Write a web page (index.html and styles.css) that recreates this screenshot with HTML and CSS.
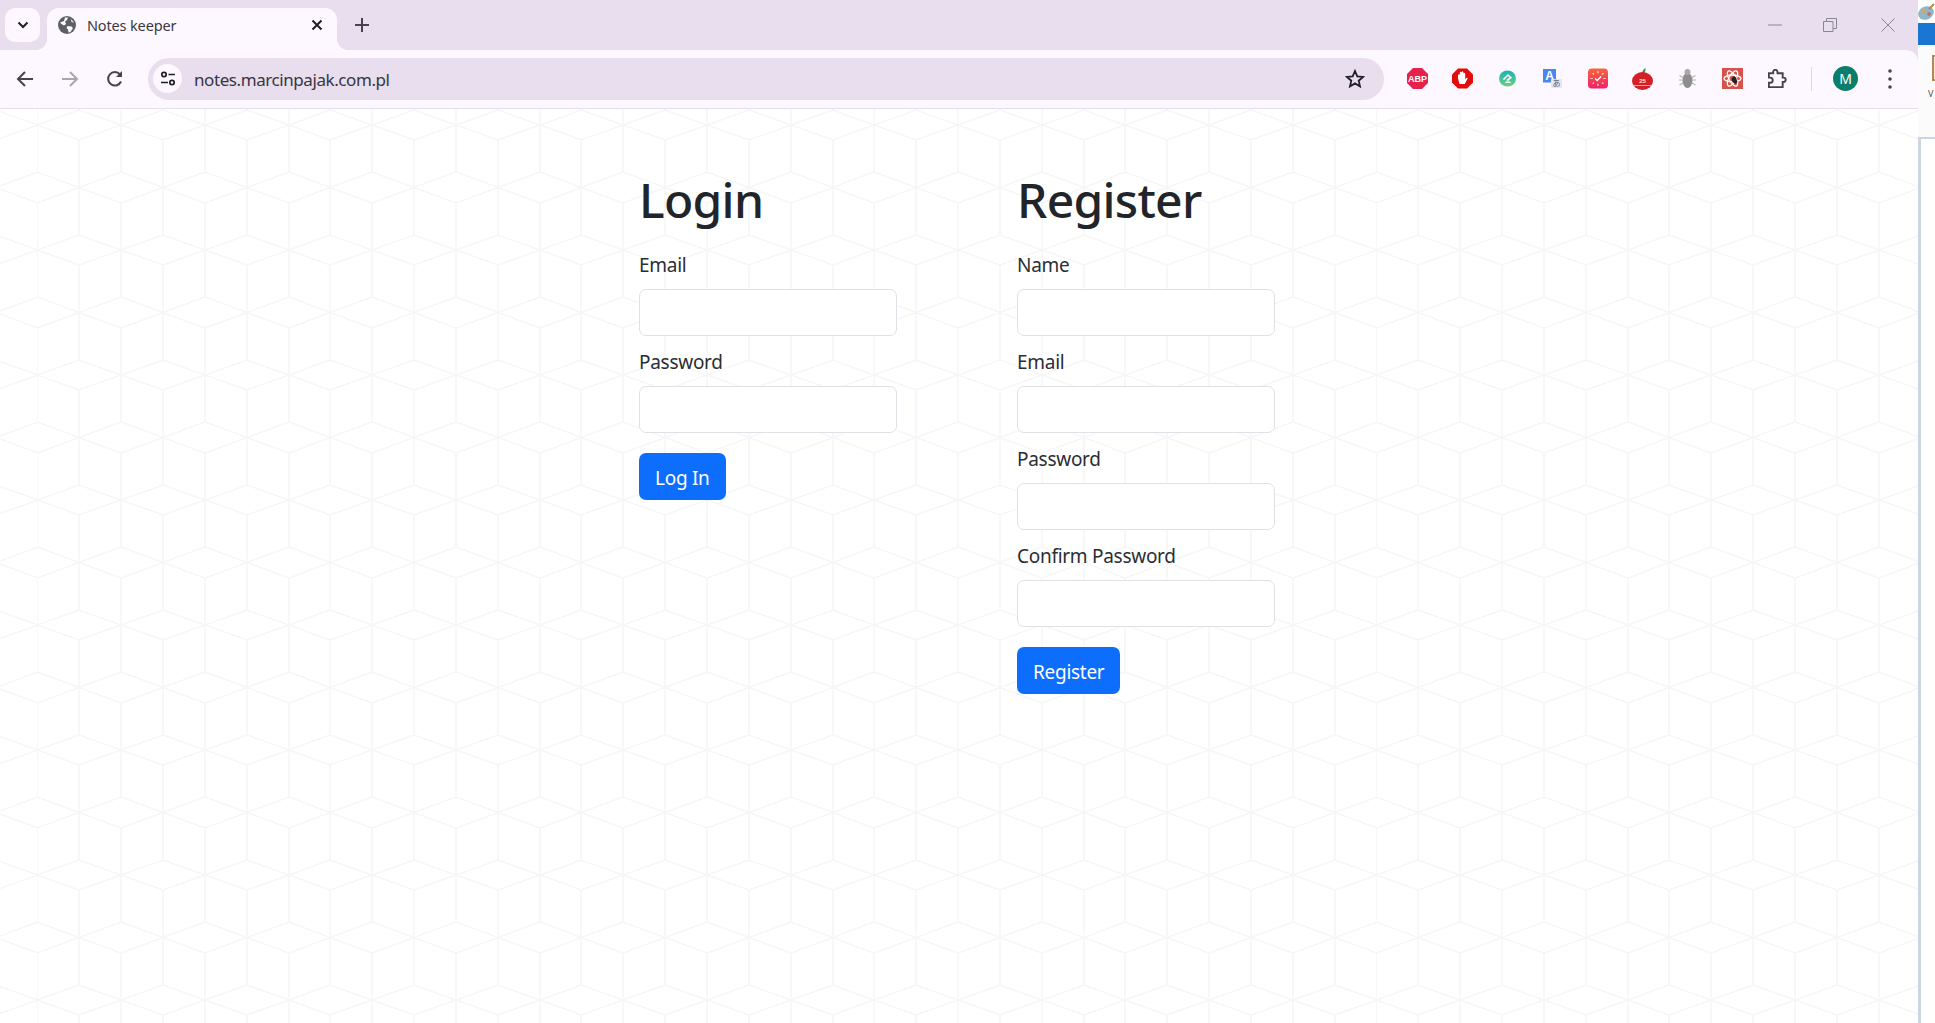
FILE: index.html
```html
<!DOCTYPE html>
<html lang="en">

<head>
  <meta charset="UTF-8">
  <meta name="viewport" content="width=device-width, initial-scale=1.0">
  <title>Notes keeper</title>
  <link rel="stylesheet" href="styles.css">
</head>

<body>
  <div class="browser">

    <div class="tab-strip">
      <button class="tab-search">
        <svg width="14" height="14" viewBox="0 0 14 14"><path d="M2.5 4.5 7 9l4.5-4.5" fill="none" stroke="#1f1f27" stroke-width="2"/></svg>
      </button>
      <div class="tab">
        <svg class="globe" width="18" height="18" viewBox="0 0 18 18">
          <circle cx="9" cy="9" r="9" fill="#5c5f66"/>
          <path d="M2 6.500 6 5l1-3.500h3L9 4 7 5.500l1 2.500-2 1.500L3.500 8zM9.500 10l4 .5 1.500 1.500-2.500 4-2 .5-.5-3-1.500-1.500zM13 3l3 3.500-2.500-.5z" fill="#fdf7ff"/>
        </svg>
        <span class="tab-title">Notes keeper</span>
        <svg class="tab-close" width="12" height="12" viewBox="0 0 12 12"><path d="M1.500 1.500l9 9m0-9l-9 9" stroke="#1f1f27" stroke-width="2"/></svg>
      </div>
      <svg class="new-tab" width="14" height="14" viewBox="0 0 14 14"><path d="M7 0v14M0 7h14" stroke="#47424d" stroke-width="2"/></svg>
      <div class="window-controls">
        <svg width="14" height="14" viewBox="0 0 14 14"><path d="M0 7h14" stroke="#8a8690"/></svg>
        <svg width="14" height="14" viewBox="0 0 14 14"><path d="M.5 3.500h9.500v10H.5zM3.500 3.500V.5h10v10H10" fill="none" stroke="#8a8690"/></svg>
        <svg width="14" height="14" viewBox="0 0 14 14"><path d="M.5.500l13 13m0-13l-13 13" stroke="#8a8690"/></svg>
      </div>
    </div>

    <div class="toolbar">
      <div class="nav-buttons">
        <svg width="18" height="18" viewBox="0 0 18 18"><path d="M17 9H2.500M9 2 2 9l7 7" fill="none" stroke="#47424d" stroke-width="2"/></svg>
        <svg width="18" height="18" viewBox="0 0 18 18"><path d="M1 9h14.500M9 2l7 7-7 7" fill="none" stroke="#a9a5ad" stroke-width="2"/></svg>
        <svg width="18" height="18" viewBox="0 0 18 18"><path d="M15 11.500A6.700 6.700 0 1 1 14 4.500" fill="none" stroke="#47424d" stroke-width="2"/><path d="M16 1v6h-6z" fill="#47424d"/></svg>
      </div>

      <div class="address-bar">
        <span class="site-settings">
          <svg width="16" height="16" viewBox="0 0 16 16" fill="none" stroke="#1f1f27" stroke-width="1.700"><circle cx="4" cy="3.500" r="2.200"/><path d="M8.500 3.500H15M1 11.500h7"/><circle cx="12" cy="11.500" r="2.200"/></svg>
        </span>
        <span class="url">notes.marcinpajak.com.pl</span>
        <svg class="star" width="20" height="20" viewBox="0 0 20 20"><path d="M10 2l2.300 5.400 5.800.5-4.400 3.800 1.300 5.700-5-3-5 3 1.300-5.700-4.400-3.800 5.800-.5z" fill="none" stroke="#1f1f27" stroke-width="1.800"/></svg>
      </div>

      <div class="extensions">
        <span class="ext">
          <svg width="21" height="21" viewBox="0 0 21 21"><path d="M6 0h9l6 6v9l-6 6H6l-6-6V6z" fill="#e8214c"/><text x="10.500" y="14" text-anchor="middle" class="ext-label">ABP</text></svg>
        </span>
        <span class="ext">
          <svg width="21" height="21" viewBox="0 0 21 20"><path d="M6 0h9l6 6v8l-6 6H6l-6-6V6z" fill="#e20c0c"/><path d="M6 10V6.500q.9-1.300 1.800 0V4q.9-1.300 1.800 0V3.500q.9-1.300 1.800 0V5q.9-1.300 1.800 0v6l1.400-1.700q1.400-.4.9.9l-2.700 5.300H7.500z" fill="#fff"/></svg>
        </span>
        <span class="ext">
          <svg width="17" height="17" viewBox="0 0 17 16">
            <defs><linearGradient id="greenGrad" x1="0" y1="0" x2="0" y2="1"><stop offset="0" stop-color="#17b3b8"/><stop offset="1" stop-color="#6fce7c"/></linearGradient></defs>
            <ellipse cx="8.500" cy="8" rx="8.500" ry="8" fill="url(#greenGrad)"/>
            <path d="M4.500 9 9 4.500l2.800 2.700L8 10M6.500 11.700h5" fill="none" stroke="#fff" stroke-width="1.600"/>
          </svg>
        </span>
        <span class="ext">
          <svg width="19" height="19" viewBox="0 0 19 19">
            <rect width="13" height="13.500" fill="#4a86ee"/>
            <text x="6.500" y="11" text-anchor="middle" class="ext-a">A</text>
            <rect x="8" y="10" width="11" height="9" rx="1" fill="#e9e4ee"/>
            <text x="13.500" y="17" text-anchor="middle" class="ext-kana">あ</text>
          </svg>
        </span>
        <span class="ext">
          <svg width="20" height="21" viewBox="0 0 21 21">
            <defs><linearGradient id="clockGrad" x1="0" y1="0" x2="0" y2="1"><stop offset="0" stop-color="#f7663a"/><stop offset="1" stop-color="#f2206a"/></linearGradient></defs>
            <rect width="21" height="21" rx="4" fill="url(#clockGrad)"/>
            <path d="M10.500 2.500v2.500M10.500 16v2.500M2.500 10.500H5M16 10.500h2.500M4.800 4.800l1.500 1.500M14.700 14.700l1.500 1.500M16.200 4.800l-1.500 1.500M6.300 14.700l-1.500 1.500" stroke="#ffd7cb" stroke-width="1.300"/>
            <path d="M7.500 10.500l2.200 2 4-4" fill="none" stroke="#fff" stroke-width="1.500"/>
          </svg>
        </span>
        <span class="ext">
          <svg width="21" height="22" viewBox="0 0 21 22">
            <path d="M10.500 6q-1-3.500 3-6 .5 4.500-3 6z" fill="#2f9a43"/>
            <ellipse cx="10.500" cy="13" rx="10.500" ry="9" fill="#d32027"/>
            <path d="M1.500 17.500h18" stroke="#f4a6a0" stroke-width="1"/>
            <text x="10.500" y="14.500" text-anchor="middle" class="ext-tomato">25</text>
          </svg>
        </span>
        <span class="ext">
          <svg width="17" height="19" viewBox="0 0 17 19">
            <ellipse cx="8.500" cy="11.500" rx="5" ry="7.500" fill="#8d8d90"/>
            <ellipse cx="8.500" cy="3" rx="3" ry="3" fill="#a9a9ac"/>
            <path d="M.5 6.500l3.500 2M0 11h3.800M.5 16l3.500-2M16.500 6.500 13 8.500M17 11h-3.800M16.500 16 13 14" stroke="#b2b2b5" stroke-width="1.100"/>
          </svg>
        </span>
        <span class="ext">
          <svg width="21" height="21" viewBox="0 0 21 21">
            <rect width="21" height="21" fill="#d6524a"/>
            <g fill="none" stroke="#fff" stroke-width="1.300">
              <ellipse cx="10.500" cy="10.500" rx="8.500" ry="3.500"/>
              <ellipse cx="10.500" cy="10.500" rx="8.500" ry="3.500" transform="rotate(60 10.500 10.500)"/>
              <ellipse cx="10.500" cy="10.500" rx="8.500" ry="3.500" transform="rotate(120 10.500 10.500)"/>
            </g>
            <path d="M12 8l2 1.500 1.500 4.500-2 2-3-2-1-3.500z" fill="#2a2024"/>
          </svg>
        </span>
        <span class="ext">
          <svg width="19" height="19" viewBox="0 0 22 22"><path d="M1 5h5V3.500a2.500 2.500 0 0 1 5 0V5h6v5h1a2.500 2.500 0 0 1 0 5h-1v6H1v-5h1.500a3 3 0 0 0 0-6H1z" fill="none" stroke="#47424d" stroke-width="2.200"/></svg>
        </span>
        <span class="toolbar-divider"></span>
        <span class="avatar">M</span>
        <svg class="menu-dots" width="4" height="20" viewBox="0 0 4 20" fill="#47424d"><circle cx="2" cy="2" r="1.800"/><circle cx="2" cy="10" r="1.800"/><circle cx="2" cy="18" r="1.800"/></svg>
      </div>
    </div>

    <main class="page">
      <div class="forms">
        <form class="auth-form">
          <h1>Login</h1>
          <div class="field">
            <label>Email</label>
            <input type="email">
          </div>
          <div class="field">
            <label>Password</label>
            <input type="password">
          </div>
          <button type="button" class="btn">Log In</button>
        </form>

        <form class="auth-form">
          <h1>Register</h1>
          <div class="field">
            <label>Name</label>
            <input type="text">
          </div>
          <div class="field">
            <label>Email</label>
            <input type="email">
          </div>
          <div class="field">
            <label>Password</label>
            <input type="password">
          </div>
          <div class="field">
            <label>Confirm Password</label>
            <input type="password">
          </div>
          <button type="button" class="btn">Register</button>
        </form>
      </div>
    </main>
  </div>

  <aside class="next-window">
    <div class="next-title">
      <svg width="17" height="18" viewBox="0 0 17 18"><ellipse cx="8" cy="10" rx="8" ry="6.500" fill="#8fb6c9" transform="rotate(-25 8 10)"/><circle cx="6" cy="8" r="2" fill="#e3a34f"/><circle cx="11" cy="11" r="1.800" fill="#c8675a"/><path d="M11 6l5-5" stroke="#b5894f" stroke-width="2"/></svg>
    </div>
    <div class="next-bar"></div>
    <div class="next-panel">
      <span class="next-thumb"></span>
      <span class="next-text">V</span>
    </div>
    <div class="next-edge"></div>
  </aside>
</body>

</html>
```

FILE: styles.css
```css
* {
  box-sizing: border-box;
  font-family: "Noto Sans", "Open Sans", sans-serif;
}

body {
  margin: 0;
  height: 100vh;
  display: flex;
  overflow: hidden;
  background: #fff;
}

.browser {
  width: 1918px;
  display: flex;
  flex-direction: column;
  background: #e8deee;
}

/* tab strip */
.tab-strip {
  height: 50px;
  display: flex;
  align-items: flex-end;
  padding-left: 5px;
}

.tab-search {
  width: 35px;
  height: 34px;
  margin-bottom: 8px;
  display: flex;
  align-items: center;
  justify-content: center;
  padding: 0;
  border: none;
  border-radius: 10px;
  background: #fdf7ff;
}

.tab {
  position: relative;
  width: 290px;
  height: 42px;
  margin-left: 7px;
  padding: 0 14px 8px 11px;
  display: flex;
  align-items: center;
  border-radius: 12px 12px 0 0;
  background: #fdf7ff;
}

.tab::before,
.tab::after {
  content: "";
  position: absolute;
  bottom: 0;
  width: 12px;
  height: 12px;
}

.tab::before {
  left: -12px;
  background: radial-gradient(circle at 0 0, transparent 12px, #fdf7ff 12.500px);
}

.tab::after {
  right: -12px;
  background: radial-gradient(circle at 100% 0, transparent 12px, #fdf7ff 12.500px);
}

.tab-title {
  margin-left: 11px;
  flex: 1;
  font-size: 14.500px;
  letter-spacing: -0.150px;
  color: #3a3741;
}

.new-tab {
  margin: 0 0 18px 18px;
}

.window-controls {
  margin: 0 23px 18px auto;
  display: flex;
  gap: 44px;
}

.window-controls svg:first-child {
  margin-right: -3px;
}

/* toolbar */
.toolbar {
  height: 59px;
  padding-bottom: 1px;
  display: flex;
  align-items: center;
  background: #fdf7ff;
  border-bottom: 1px solid #e4dfe8;
  border-top-right-radius: 12px;
}

.nav-buttons {
  width: 148px;
  padding-left: 16px;
  display: flex;
  gap: 27px;
}

.address-bar {
  width: 1236px;
  height: 42px;
  padding: 0 19px 0 5px;
  display: flex;
  align-items: center;
  border-radius: 21px;
  background: #e8deee;
}

.site-settings {
  width: 29px;
  height: 29px;
  display: flex;
  align-items: center;
  justify-content: center;
  border-radius: 50%;
  background: #fdf7ff;
}

.url {
  margin-left: 12px;
  padding-top: 1px;
  flex: 1;
  font-size: 17px;
  letter-spacing: -0.420px;
  color: #38353f;
}

.extensions {
  margin-left: 11px;
  display: flex;
  align-items: center;
}

.ext {
  width: 45px;
  display: flex;
  justify-content: center;
}

.ext-label {
  font-size: 9px;
  font-weight: 700;
  fill: #fff;
  font-family: "Liberation Sans", sans-serif;
}

.ext-a {
  font-size: 12px;
  font-weight: 700;
  fill: #fff;
  font-family: "Liberation Sans", sans-serif;
}

.ext-kana {
  font-size: 8px;
  fill: #555a66;
  font-family: "Noto Sans CJK JP", sans-serif;
}

.ext-tomato {
  font-size: 6px;
  font-weight: 700;
  fill: #ffe3d6;
  font-family: "Liberation Sans", sans-serif;
}

.toolbar-divider {
  width: 1px;
  height: 24px;
  margin: 0 21px 0 11px;
  background: #dcd6e2;
}

.avatar {
  width: 25px;
  height: 25px;
  display: flex;
  align-items: center;
  justify-content: center;
  border-radius: 50%;
  background: #0a7d6d;
  color: #fff;
  font-size: 14px;
}

.menu-dots {
  margin-left: 30px;
}

/* page */
.page {
  flex: 1;
  padding: 61px 0 0 639px;
  background-color: #fff;
  background-image: url("data:image/svg+xml,%3Csvg xmlns='http://www.w3.org/2000/svg' width='83.7' height='125' viewBox='0 0 83.7 125'%3E%3Cpath d='M0 0 41.85 15 83.7 0M0 125 41.85 110 83.7 125M41.85 15V110M0 0V47M83.7 0V47M0 78V125M83.7 78V125M0 47 41.85 62.500 83.7 47M0 78 41.85 62.500 83.7 78' fill='none' stroke='%23f6f6f7' stroke-width='1.500'/%3E%3C/svg%3E");
  background-size: 83.7px 125px;
  background-position: 37.500px 16px;
}

.forms {
  display: grid;
  grid-template-columns: 378px 258px;
}

.auth-form {
  display: flex;
  flex-direction: column;
  align-items: flex-start;
}

h1 {
  margin: 0 0 20px;
  font-size: 48px;
  line-height: 60px;
  letter-spacing: -0.700px;
  font-weight: 500;
  color: #212529;
}

.field {
  margin-bottom: 11px;
}

label {
  display: block;
  margin-bottom: 9px;
  font-size: 19px;
  line-height: 30px;
  letter-spacing: -0.280px;
  color: #2a2e33;
}

input {
  display: block;
  width: 258px;
  height: 47px;
  padding: 0;
  border: 1px solid #dee2e6;
  border-radius: 7px;
  background: #fff;
}

.btn {
  margin-top: 9px;
  height: 47px;
  padding: 2px 16px 0;
  border: none;
  border-radius: 7px;
  background: #0d6efd;
  color: #fff;
  font-size: 19px;
  letter-spacing: -0.280px;
}

/* window behind, on the right */
.next-window {
  width: 17px;
  display: flex;
  flex-direction: column;
  background: #fff;
}

.next-title {
  height: 23px;
  padding-top: 3px;
}

.next-bar {
  height: 22px;
  background: #1976d2;
}

.next-panel {
  position: relative;
  height: 92px;
  background: #fbfbfb;
}

.next-thumb {
  position: absolute;
  left: 14px;
  top: 10px;
  width: 3px;
  height: 26px;
  border: 2px solid #b08a5a;
  border-right: none;
  background: #f4e9d4;
}

.next-text {
  position: absolute;
  left: 10px;
  top: 42px;
  font-size: 9px;
  color: #555;
}

.next-edge {
  flex: 1;
  border-left: 3px solid #ccd5e3;
  border-top: 2px solid #ccd5e3;
}
```
